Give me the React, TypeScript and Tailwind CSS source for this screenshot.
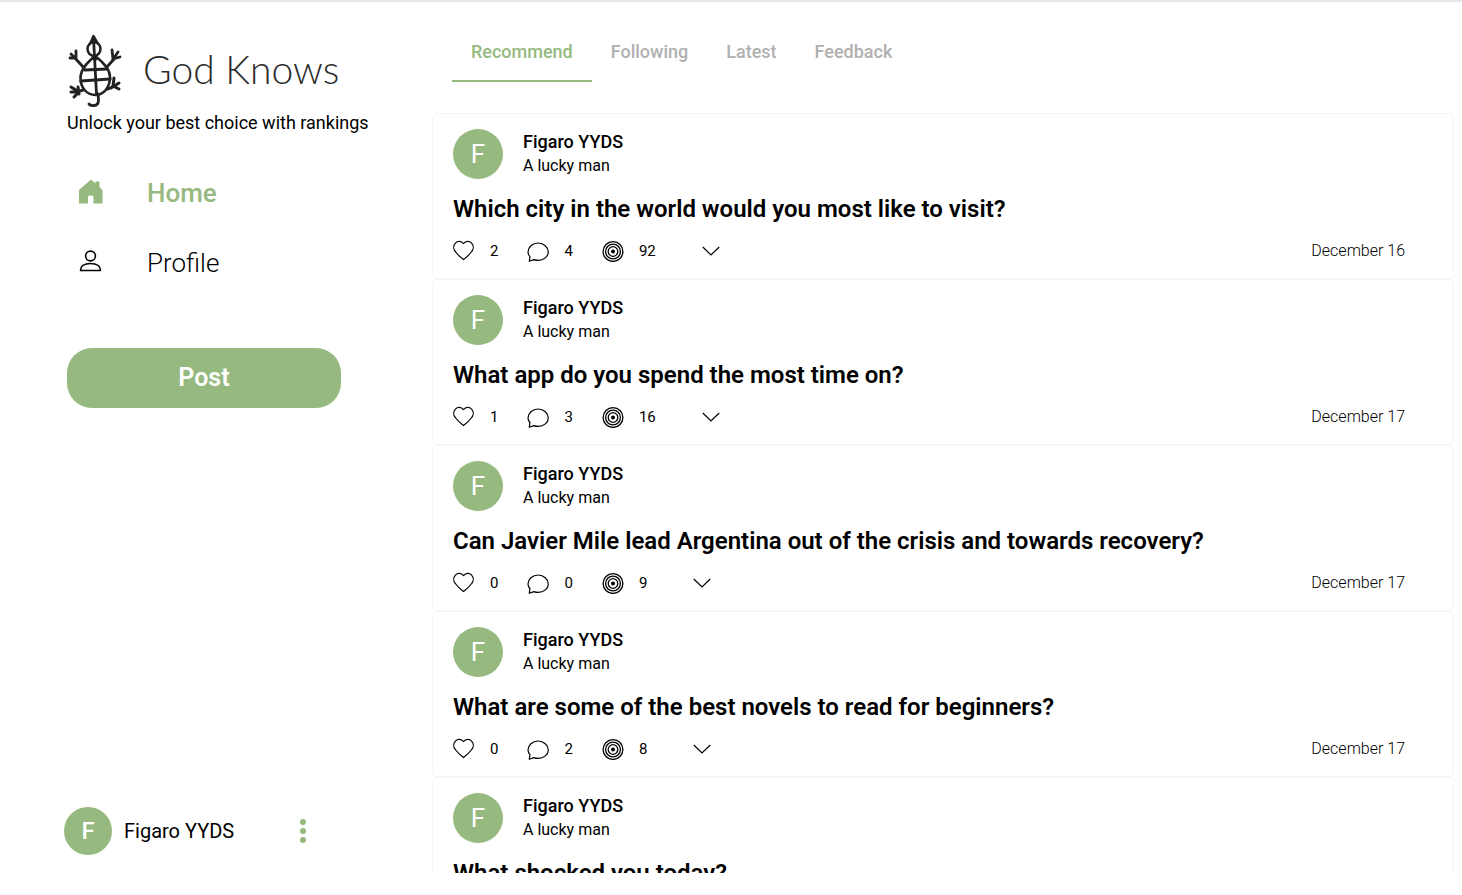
import React from "react";

type Question = {
  title: string;
  likes: number;
  comments: number;
  hits: number;
  date: string;
};

const questions: Question[] = [
  { title: "Which city in the world would you most like to visit?", likes: 2, comments: 4, hits: 92, date: "December 16" },
  { title: "What app do you spend the most time on?", likes: 1, comments: 3, hits: 16, date: "December 17" },
  { title: "Can Javier Mile lead Argentina out of the crisis and towards recovery?", likes: 0, comments: 0, hits: 9, date: "December 17" },
  { title: "What are some of the best novels to read for beginners?", likes: 0, comments: 2, hits: 8, date: "December 17" },
  { title: "What shocked you today?", likes: 0, comments: 0, hits: 7, date: "December 17" },
];

const tabs = ["Recommend", "Following", "Latest", "Feedback"];

function TurtleLogo() {
  return (
    <svg viewBox="0 0 54 74" className="h-[74px] w-[54px] shrink-0" fill="none" stroke="#222" strokeWidth="2.500" strokeLinecap="round" strokeLinejoin="round" aria-hidden="true">
      <path d="M25.500 2 22.500 9Q26 6.500 29.500 9Z" fill="#1c1c1c" />
      <ellipse cx="26" cy="15" rx="6.500" ry="7" />
      <path d="M25.500 4 28.500 60" strokeWidth="2.800" />
      <path d="M27 22C20 28 12.500 35 12.500 44C12.500 54 19 61 27.500 61C36 61 42 53 42 43C42 35 35 28 27 22Z" strokeWidth="2.600" />
      <path d="M24 24 26.500 21 30 24 27.500 27Z" fill="#1c1c1c" strokeWidth="1" />
      <path d="M17 36 39 35M13 47 42 45" strokeWidth="3.200" />
      <path d="M16 34 7 24M2 24 8 24 8 17M3 20 9 26" strokeWidth="2.800" />
      <path d="M38 34 47 24M44 16 45 25 52 23M50 18 44 27" strokeWidth="2.800" />
      <path d="M15 56 9 58M3 53 11 58 6 63M3 58 11 58M10 53 11 60" strokeWidth="3" />
      <path d="M40 55 46 52M46 44 45 52 51 55M51 49 43 54" strokeWidth="3" />
      <path d="M30 60 30.500 66Q30.500 71.500 26 71.500Q22 72 21 70" strokeWidth="2.800" />
    </svg>
  );
}

function HomeIcon() {
  return (
    <svg viewBox="0 0 24 25" className="h-[25px] w-6" fill="currentColor" aria-hidden="true">
      <path d="M12 .5 16.500 4.600V2.500H20.500V8.200L23.500 11V24.500H14.500V18Q14.500 16.500 13 16.500H10.500Q9 16.500 9 18V24.500H0V11Z" />
    </svg>
  );
}

function ProfileIcon() {
  return (
    <svg viewBox="0 0 24 24" className="size-6" fill="none" stroke="currentColor" strokeWidth="1.600" strokeLinejoin="round" aria-hidden="true">
      <circle cx="11.500" cy="7" r="4.900" />
      <path d="M1.500 21.500C1.500 17.500 5 14.500 11.500 14.500S21.500 17.500 21.500 21.500Z" />
    </svg>
  );
}

function HeartIcon() {
  return (
    <svg viewBox="0 0 22 22" className="size-[22px]" fill="none" stroke="currentColor" strokeWidth="1.200" strokeLinejoin="round" aria-hidden="true">
      <path d="M10.500 3.600C8.300.8 4.600.8 2.400 3.100C.2 5.500.2 9 2.300 11.500C4.300 14.200 7.800 17.600 10.500 19.600C13.200 17.600 16.700 14.200 18.700 11.500C20.800 9 20.800 5.500 18.600 3.100C16.400.8 12.700.8 10.500 3.600Z" />
    </svg>
  );
}

function ChatIcon() {
  return (
    <svg viewBox="0 0 22 22" className="size-[22px]" fill="none" stroke="currentColor" strokeWidth="1.200" strokeLinejoin="round" aria-hidden="true">
      <path d="M2.300 21.200 3 16.600C1.600 15.200 1 13.600 1 11.900C1 7.200 5.500 3 11.100 3S21.300 7.200 21.300 11.900S16.800 20.400 11.200 20.400C9.700 20.400 8.200 20.100 6.900 19.600Z" />
    </svg>
  );
}

function TargetIcon() {
  return (
    <svg viewBox="0 0 22 22" className="size-[22px]" fill="none" stroke="currentColor" strokeWidth="1.300" aria-hidden="true">
      <circle cx="11" cy="11.500" r="9.900" />
      <circle cx="11" cy="11.500" r="7.400" />
      <circle cx="11" cy="11.500" r="4.800" />
      <circle cx="11" cy="11.500" r="2" fill="currentColor" stroke="none" />
    </svg>
  );
}

function ChevronIcon() {
  return (
    <svg viewBox="0 0 18 10" className="h-[10px] w-[18px]" fill="none" stroke="currentColor" strokeWidth="1.200" aria-hidden="true">
      <path d="M.8 1 9 9 17.200 1" />
    </svg>
  );
}

function Stat({ label, value, children }: { label: string; value: number; children: React.ReactNode }) {
  return (
    <button type="button" aria-label={`${label}: ${value}`} className="flex items-center gap-[15px]">
      {children}
      <span>{value}</span>
    </button>
  );
}

function QuestionCard({ question }: { question: Question }) {
  return (
    <article className="h-[166px] shrink-0 rounded-[5px] border border-[#f5f5f5] pt-[15px] pr-12 pl-5">
      <header className="flex gap-5">
        <span className="flex size-[50px] shrink-0 items-center justify-center rounded-full bg-[#96b97f] text-[26px] text-white">F</span>
        <div className="pt-px">
          <p className="text-lg leading-6 font-medium">Figaro YYDS</p>
          <p className="text-base leading-6">A lucky man</p>
        </div>
      </header>
      <h2 className="mt-4 text-2xl leading-7 font-semibold">
        <a href="#question">{question.title}</a>
      </h2>
      <footer className="mt-[17px] flex h-[22px] items-center gap-[29px] text-[15px]">
        <Stat label="Likes" value={question.likes}><HeartIcon /></Stat>
        <Stat label="Comments" value={question.comments}><ChatIcon /></Stat>
        <Stat label="Hits" value={question.hits}><TargetIcon /></Stat>
        <button type="button" aria-label="Show more" className="ml-[17px]"><ChevronIcon /></button>
        <time className="ml-auto text-base font-light">{question.date}</time>
      </footer>
    </article>
  );
}

export default function App() {
  return (
    <div className="flex h-screen overflow-hidden border-t-2 border-[#e5e8eb] bg-white pb-[22px] font-['Roboto','Liberation_Sans',sans-serif] text-black">
      <aside className="flex w-[432px] shrink-0 flex-col pt-8 pb-[18px] pl-16">
        <div className="flex items-center gap-[21px] pl-1">
          <TurtleLogo />
          <h1 className="pb-1 font-['Lato',sans-serif] text-[39px] leading-[50px] font-light text-[#2b2b2b]">God Knows</h1>
        </div>
        <p className="mt-[3px] pl-[3px] text-lg leading-6">Unlock your best choice with rankings</p>
        <nav className="mt-[42px] flex flex-col gap-[38px] pl-[15px]">
          <a href="#home" className="flex items-center gap-11 text-[26px] leading-8 font-medium text-[#96b97f]">
            <span className="pb-1"><HomeIcon /></span>
            Home
          </a>
          <a href="#profile" className="flex items-center gap-11 text-[26px] leading-8 font-light">
            <span className="pb-1"><ProfileIcon /></span>
            Profile
          </a>
        </nav>
        <button type="button" className="mt-[69px] ml-[3px] h-[60px] w-[274px] shrink-0 rounded-[25px] bg-[#96b97f] text-[25px] font-semibold text-white">
          Post
        </button>
        <div className="mt-auto flex w-[248px] items-center gap-3">
          <span className="flex size-12 shrink-0 items-center justify-center rounded-full bg-[#96b97f] text-2xl font-medium text-white">F</span>
          <span className="text-xl">Figaro YYDS</span>
          <button type="button" aria-label="Account menu" className="ml-auto flex w-[18px] flex-col items-center gap-[3px]">
            <span className="size-[6px] rounded-full bg-[#96b97f]" />
            <span className="size-[6px] rounded-full bg-[#96b97f]" />
            <span className="size-[6px] rounded-full bg-[#96b97f]" />
          </button>
        </div>
      </aside>
      <main className="flex min-w-0 flex-1 flex-col overflow-hidden pt-5 pr-2">
        <nav className="flex h-[60px] shrink-0 pl-5">
          {tabs.map((tab, i) => (
            <a
              key={tab}
              href={`#${tab.toLowerCase()}`}
              className={
                i === 0
                  ? "flex items-center justify-center border-b-2 border-[#96b97f] px-[19px] pt-[2px] text-lg font-medium text-[#96b97f]"
                  : "flex items-center justify-center border-b-2 border-transparent px-[19px] pt-[2px] text-lg font-medium text-[#b0b0b0]"
              }
            >
              {tab}
            </a>
          ))}
        </nav>
        <section className="mt-[31px] flex flex-col" aria-label="Questions">
          {questions.map((question) => (
            <QuestionCard key={question.title} question={question} />
          ))}
        </section>
      </main>
    </div>
  );
}
